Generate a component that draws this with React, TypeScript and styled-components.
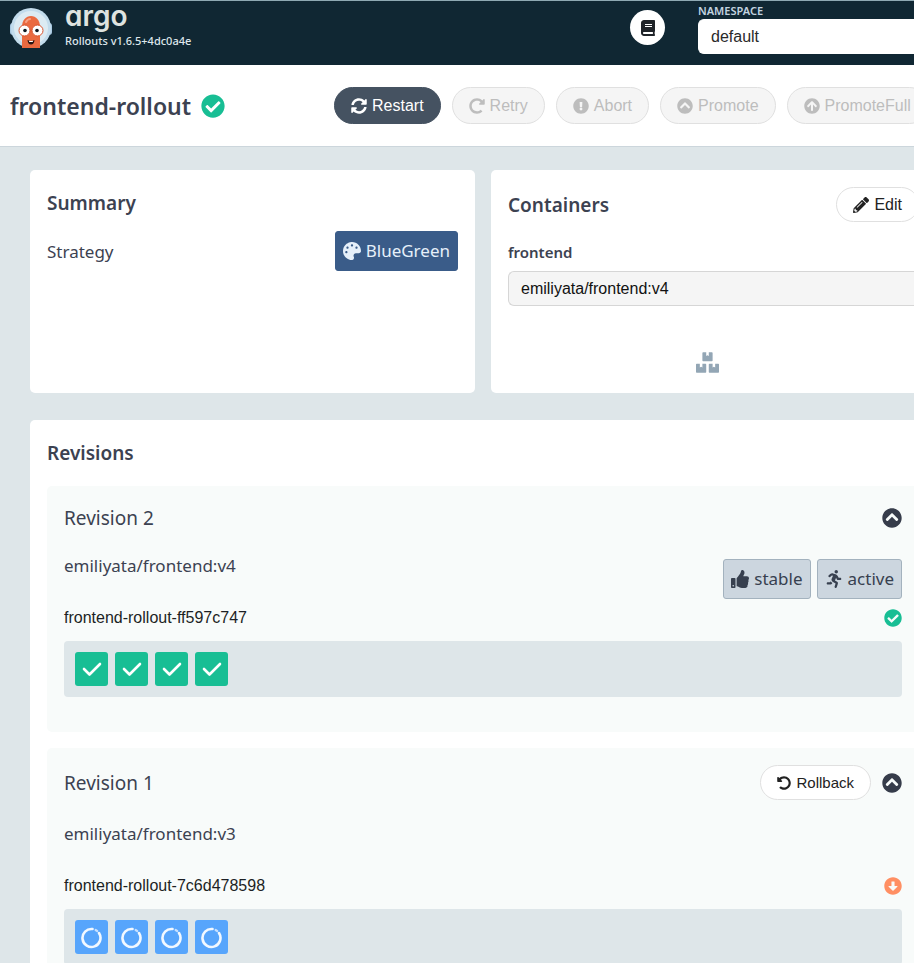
import React from 'react';
import styled, { createGlobalStyle } from 'styled-components';
import {
  FaArrowAltCircleDown,
  FaArrowCircleUp,
  FaBook,
  FaBoxes,
  FaCheckCircle,
  FaChevronCircleUp,
  FaExclamationCircle,
  FaPalette,
  FaPencilAlt,
  FaRedoAlt,
  FaRunning,
  FaSyncAlt,
  FaThumbsUp,
  FaUndoAlt,
} from 'react-icons/fa';

const sans = `'Noto Sans', 'Open Sans', sans-serif`;
const arial = `'Liberation Sans', Arial, sans-serif`;

const GlobalStyle = createGlobalStyle`
  *, *::before, *::after { box-sizing: border-box; }
  body { margin: 0; background: #fff; color: #3c4251; font-family: ${sans}; }
  h1, h2, h3, p { margin: 0; }
  svg { display: block; flex: none; }
`;

const Viewport = styled.div`
  height: 100vh;
  padding: 0 2px 7px 0;
  overflow: hidden;
`;

const Page = styled.div`
  height: 100%;
  overflow: hidden;
  background: #dee6e9;
`;

const Header = styled.header`
  display: flex;
  height: 65px;
  padding-left: 10px;
  border-top: 1px solid #8fa9b3;
  background: #102733;
`;

const Brand = styled.a`
  display: flex;
  gap: 13px;
  flex: 1;
  padding-top: 6px;
  color: #dee6eb;
  text-decoration: none;
`;

const BrandText = styled.div`
  display: flex;
  flex-direction: column;
`;

const Wordmark = styled.span`
  height: 26px;
  color: #dfe3e0;
  font: 600 28px/18px Inter, sans-serif;
  font-feature-settings: 'cv11';
`;

const Version = styled.span`
  font-size: 11px;
  line-height: 16px;
  font-weight: 500;
`;

const DocsButton = styled.a`
  display: grid;
  place-items: center;
  width: 35px;
  height: 35px;
  margin: 9px 33px 0 0;
  border-radius: 50%;
  background: #fff;
  color: #1f2328;
  font-size: 16px;
`;

const NamespaceField = styled.div`
  display: flex;
  flex-direction: column;
  width: 216px;
  padding-top: 2px;
`;

const NamespaceLabel = styled.label`
  color: #c3d4e0;
  font-size: 11px;
  line-height: 16px;
  font-weight: 600;
`;

const TextInput = styled.input<{ $muted?: boolean }>`
  width: 100%;
  height: 35px;
  padding: 0 12px;
  border: 1px solid ${(p) => (p.$muted ? '#d6d6d6' : '#fff')};
  border-right: 0;
  border-radius: 6px 0 0 6px;
  background: ${(p) => (p.$muted ? '#f5f5f5' : '#fff')};
  color: ${(p) => (p.$muted ? '#111' : '#2a2a2a')};
  font: 16px ${arial};
  outline: 0;
`;

const TitleBar = styled.section`
  display: flex;
  align-items: center;
  height: 82px;
  padding-left: 10px;
  border-bottom: 1px solid #ccd6dc;
  background: #fff;
  overflow: hidden;
`;

const Title = styled.h1`
  display: flex;
  align-items: center;
  gap: 10px;
  width: 324px;
  flex: none;
  font-size: 23px;
  line-height: 32px;
  font-weight: 600;
`;

const Actions = styled.div`
  display: flex;
  flex: 1 0 auto;
  gap: 11px;
`;

const PillButton = styled.button<{ $tone?: 'dark' | 'plain'; $small?: boolean }>`
  display: flex;
  align-items: center;
  flex: none;
  gap: 5px;
  height: ${(p) => (p.$tone === 'plain' ? '35px' : '37px')};
  padding: 0 16px;
  border: 1px solid ${(p) => (p.$tone === 'dark' ? '#455261' : '#e0e0e0')};
  border-radius: 20px;
  background: ${(p) => (p.$tone === 'dark' ? '#455261' : p.$tone === 'plain' ? '#fff' : '#f5f5f5')};
  color: ${(p) => (p.$tone === 'dark' ? '#fff' : p.$tone === 'plain' ? '#222' : '#bdbdbd')};
  font: ${(p) => (p.$small ? '15px' : '16px')} ${arial};
  white-space: nowrap;
`;

const Content = styled.main`
  display: flex;
  flex-direction: column;
  gap: 27px;
  width: calc(100% + 22px);
  padding: 23px 0 0 30px;
`;

const CardRow = styled.div`
  display: grid;
  grid-template-columns: 1fr 1fr;
  gap: 16px;
`;

const Card = styled.section`
  min-height: 223px;
  padding: 17px;
  border-radius: 5px;
  background: #fff;
`;

const CardHeader = styled.div<{ $height: number }>`
  display: flex;
  align-items: center;
  justify-content: space-between;
  height: ${(p) => p.$height}px;
`;

const CardTitle = styled.h2`
  font-size: 19px;
  line-height: 28px;
  font-weight: 600;
`;

const SummaryRow = styled.div`
  display: flex;
  align-items: center;
  justify-content: space-between;
  margin-top: 12px;
  font-size: 17px;
`;

const Badge = styled.span<{ $blue?: boolean }>`
  display: flex;
  align-items: center;
  gap: 5px;
  height: 40px;
  padding: 0 7px;
  border: 1px solid ${(p) => (p.$blue ? '#3a5c89' : '#a3b2be')};
  border-radius: 3px;
  background: ${(p) => (p.$blue ? '#3a5c89' : '#ccd6df')};
  color: ${(p) => (p.$blue ? '#e6f0fa' : '#37404f')};
  font-size: 17px;
  line-height: 24px;
  white-space: nowrap;
`;

const ContainerLabel = styled.label`
  display: block;
  margin: 18px 0 6px;
  font-size: 15px;
  line-height: 25px;
  font-weight: 600;
`;

const BoxesMark = styled.div`
  display: flex;
  justify-content: center;
  margin-top: 45px;
  padding-right: 12px;
  color: #93a6b5;
`;

const RevisionList = styled.div`
  display: flex;
  flex-direction: column;
  gap: 16px;
  margin-top: 17px;
`;

const Revision = styled.article`
  padding: 17px 17px 35px;
  border-radius: 5px;
  background: #f8fbfa;
`;

const RevisionHeader = styled.div`
  display: flex;
  align-items: center;
  gap: 11px;
  min-height: 29px;
`;

const RevisionTitle = styled.h3`
  flex: 1;
  font-size: 19px;
  line-height: 28px;
  font-weight: 400;
`;

const ToggleButton = styled.button`
  padding: 0;
  border: 0;
  background: none;
  color: #363c4a;
  font-size: 20px;
`;

const InfoRow = styled.div`
  display: flex;
  justify-content: space-between;
  min-height: 50px;
  margin: 17px 0 9px;
`;

const ImageName = styled.p`
  font-size: 17px;
  line-height: 34px;
`;

const Badges = styled.div`
  display: flex;
  gap: 6px;
  padding-top: 10px;
`;

const ReplicaRow = styled.div`
  display: flex;
  align-items: center;
  justify-content: space-between;
  height: 20px;
  margin-bottom: 13px;
  color: #1c1f24;
  font: 16px ${arial};
`;

const StatusIcon = styled.span<{ $color: string }>`
  color: ${(p) => p.$color};
  font-size: 18px;
`;

const Pods = styled.div`
  display: flex;
  gap: 7px;
  padding: 11px;
  border-radius: 4px;
  background: #dee6e9;
`;

const Pod = styled.span<{ $ready: boolean }>`
  display: grid;
  place-items: center;
  width: 33px;
  height: 34px;
  border-radius: 3px;
  background: ${(p) => (p.$ready ? '#18be94' : '#57a5fc')};
`;

const ArgoMascot = () => (
  <svg width="42" height="43" viewBox="0 0 42 43" aria-hidden="true">
    <rect x="0" y="16" width="42" height="12" rx="3" fill="#a9c9e2" />
    <circle cx="21" cy="21" r="20" fill="#c3dcec" />
    <circle cx="21" cy="21" r="17" fill="#dcebf3" />
    <path d="M12 41V20c0-7 4-11 9-11s9 4 9 11v21z" fill="#ea6a40" />
    <path d="M16 15c1-2 2-3 4-3" stroke="#f7a184" strokeWidth="2" strokeLinecap="round" fill="none" />
    <circle cx="14.5" cy="23.5" r="5.5" fill="#fff" stroke="#d9532d" strokeWidth="1" />
    <circle cx="27.5" cy="23.5" r="5.5" fill="#fff" stroke="#d9532d" strokeWidth="1" />
    <circle cx="15" cy="23.5" r="1.8" fill="#101820" />
    <circle cx="27" cy="23.5" r="1.8" fill="#101820" />
    <path d="M17.5 33q3.500 2 7 0q-.5 4.500-3.500 4.500t-3.500-4.500z" fill="#2a1512" />
    <path d="M19 33.700q2 .8 4 0v1q-2 .8-4 0z" fill="#fff" />
  </svg>
);

const Tick = () => (
  <svg width="20" height="16" viewBox="0 0 20 16" fill="none" aria-label="running">
    <path d="M2 8l5.5 5.5L18 3" stroke="#fff" strokeWidth="2.6" strokeLinecap="round" strokeLinejoin="round" />
  </svg>
);

const Spinner = () => (
  <svg width="24" height="24" viewBox="0 0 24 24" fill="none" aria-label="pending">
    <path d="M19 8A9 9 0 1 1 12.5 4" stroke="#f2f8ff" strokeWidth="2.6" strokeLinecap="round" />
    <path d="M15.6 5l1.6 1" stroke="#c6e0ff" strokeWidth="2.2" strokeLinecap="round" />
  </svg>
);

type RevisionData = { number: number; image: string; replicaSet: string; current: boolean };

const revisions: RevisionData[] = [
  { number: 2, image: 'emiliyata/frontend:v4', replicaSet: 'frontend-rollout-ff597c747', current: true },
  { number: 1, image: 'emiliyata/frontend:v3', replicaSet: 'frontend-rollout-7c6d478598', current: false },
];

const RevisionCard = ({ data }: { data: RevisionData }) => (
  <Revision>
    <RevisionHeader>
      <RevisionTitle>Revision {data.number}</RevisionTitle>
      {!data.current && (
        <PillButton $tone="plain" $small>
          <FaUndoAlt size={14} />
          Rollback
        </PillButton>
      )}
      <ToggleButton aria-label={`Collapse revision ${data.number}`}>
        <FaChevronCircleUp />
      </ToggleButton>
    </RevisionHeader>
    <InfoRow>
      <ImageName>{data.image}</ImageName>
      {data.current && (
        <Badges>
          <Badge>
            <FaThumbsUp size={18} />
            stable
          </Badge>
          <Badge>
            <FaRunning size={18} />
            active
          </Badge>
        </Badges>
      )}
    </InfoRow>
    <ReplicaRow>
      {data.replicaSet}
      <StatusIcon $color={data.current ? '#18be94' : '#ff8f63'}>
        {data.current ? <FaCheckCircle /> : <FaArrowAltCircleDown />}
      </StatusIcon>
    </ReplicaRow>
    <Pods>
      {[0, 1, 2, 3].map((pod) => (
        <Pod key={pod} $ready={data.current}>
          {data.current ? <Tick /> : <Spinner />}
        </Pod>
      ))}
    </Pods>
  </Revision>
);

export default function App() {
  return (
    <Viewport>
      <GlobalStyle />
      <Page>
        <Header>
          <Brand href="#">
            <ArgoMascot />
            <BrandText>
              <Wordmark>argo</Wordmark>
              <Version>Rollouts v1.6.5+4dc0a4e</Version>
            </BrandText>
          </Brand>
          <DocsButton href="#docs" aria-label="Documentation">
            <FaBook />
          </DocsButton>
          <NamespaceField>
            <NamespaceLabel htmlFor="namespace">NAMESPACE</NamespaceLabel>
            <TextInput id="namespace" defaultValue="default" />
          </NamespaceField>
        </Header>
        <TitleBar>
          <Title>
            frontend-rollout
            <FaCheckCircle size={24} color="#18be94" />
          </Title>
          <Actions>
            <PillButton $tone="dark"><FaSyncAlt />Restart</PillButton>
            <PillButton disabled><FaRedoAlt />Retry</PillButton>
            <PillButton disabled><FaExclamationCircle />Abort</PillButton>
            <PillButton disabled><FaChevronCircleUp />Promote</PillButton>
            <PillButton disabled><FaArrowCircleUp />PromoteFull</PillButton>
          </Actions>
        </TitleBar>
        <Content>
          <CardRow>
            <Card>
              <CardHeader $height={32}>
                <CardTitle>Summary</CardTitle>
              </CardHeader>
              <SummaryRow>
                Strategy
                <Badge $blue>
                  <FaPalette size={18} />
                  BlueGreen
                </Badge>
              </SummaryRow>
            </Card>
            <Card>
              <CardHeader $height={35}>
                <CardTitle>Containers</CardTitle>
                <PillButton $tone="plain"><FaPencilAlt />Edit</PillButton>
              </CardHeader>
              <ContainerLabel htmlFor="image">frontend</ContainerLabel>
              <TextInput id="image" $muted readOnly value="emiliyata/frontend:v4" />
              <BoxesMark>
                <FaBoxes size={23} />
              </BoxesMark>
            </Card>
          </CardRow>
          <Card>
            <CardHeader $height={32}>
              <CardTitle>Revisions</CardTitle>
            </CardHeader>
            <RevisionList>
              {revisions.map((r) => (
                <RevisionCard key={r.number} data={r} />
              ))}
            </RevisionList>
          </Card>
        </Content>
      </Page>
    </Viewport>
  );
}
